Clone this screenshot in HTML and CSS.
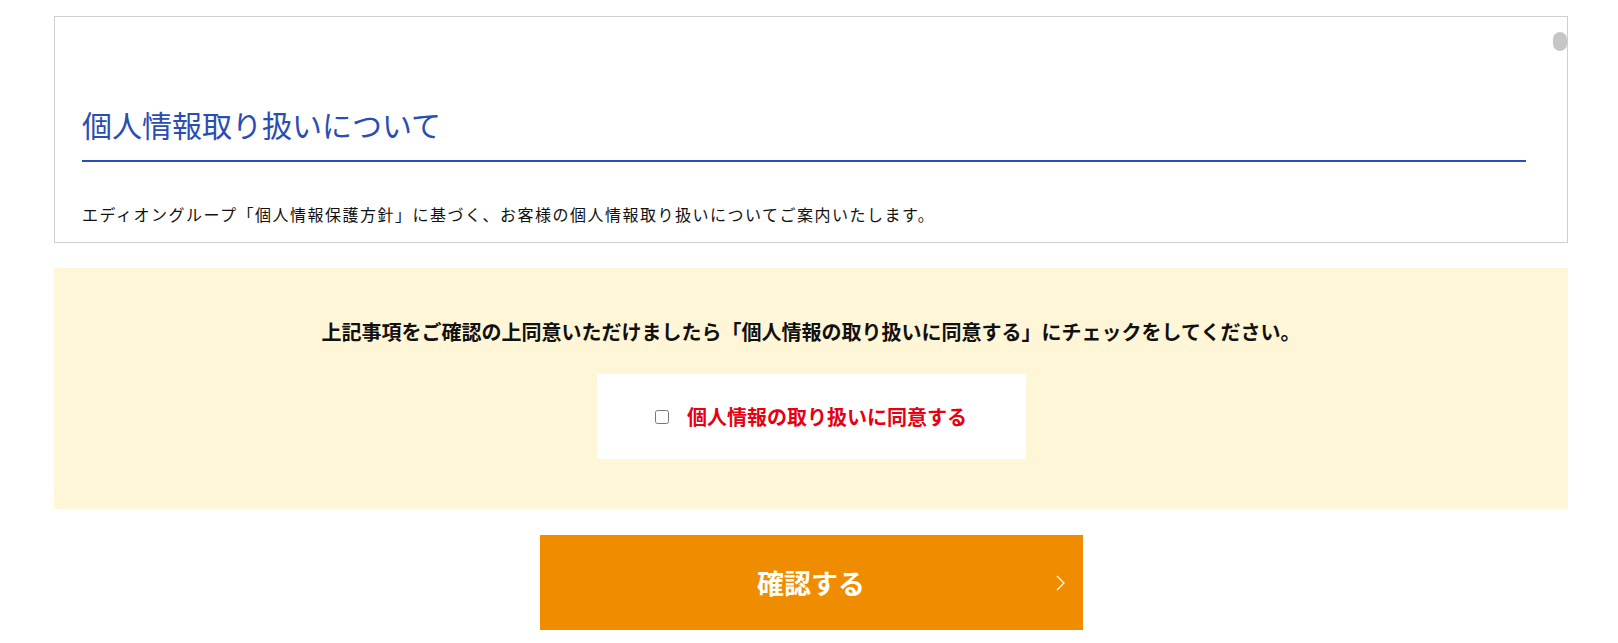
FILE: index.html
```html
<!DOCTYPE html>
<html lang="ja">
<head>
    <meta charset="UTF-8">
    <meta name="viewport" content="width=device-width, initial-scale=1.0">
    <title>個人情報取り扱いについて</title>
    <link rel="stylesheet" href="styles.css">
</head>
<body>

    <div class="wrap">
        <!-- 規約エリア（スクロール） -->
        <div class="policy">
            <div class="policy-inner">
                <h2 class="policy-title">個人情報取り扱いについて</h2>
                <p class="policy-lead">エディオングループ「個人情報保護方針」に基づく、お客様の個人情報取り扱いについてご案内いたします。</p>
            </div>
            <span class="policy-thumb"></span>
        </div>

        <!-- 同意チェック -->
        <div class="agree">
            <p class="agree-text">上記事項をご確認の上同意いただけましたら「個人情報の取り扱いに同意する」にチェックをしてください。</p>
            <label class="agree-box">
                <input type="checkbox" class="agree-check">
                <span class="agree-label">個人情報の取り扱いに同意する</span>
            </label>
        </div>

        <div class="actions">
            <button type="button" class="button">
                確認する
                <svg class="button-arrow" width="9" height="16" viewBox="0 0 9 16">
                    <path d="M1 1 L8 8 L1 15" fill="none" stroke="#fff" stroke-width="1.2"/>
                </svg>
            </button>
        </div>
    </div>

</body>
</html>
```

FILE: styles.css
```css
body {
    font-family: "Noto Sans CJK JP", "Noto Sans", sans-serif;
    margin: 0;
    padding: 0;
    background-color: #fff;
    color: #222;
}
.wrap {
    width: 1514px;
    margin: 16px 0 0 54px;
}
.policy {
    position: relative;
    height: 227px;
    box-sizing: border-box;
    border: 1px solid #cfcfcf;
    overflow: hidden;
}
.policy-inner {
    padding: 85px 41px 0 27px;
}
.policy-title {
    margin: 0;
    padding-bottom: 13px;
    font-size: 30px;
    font-weight: 400;
    line-height: 45px;
    color: #2a4db3;
    border-bottom: 2px solid #2a4db3;
}
.policy-lead {
    margin: 38px 0 0;
    font-size: 16px;
    line-height: 28.8px;
    letter-spacing: 1.5px;
    color: #111;
}
/* スクロールバーのつまみ */
.policy-thumb {
    position: absolute;
    top: 15px;
    right: 0;
    width: 14px;
    height: 19px;
    border-radius: 7px;
    background-color: #c6c6c6;
}
.agree {
    margin-top: 25px;
    padding: 49px 0 50px;
    background-color: #fff6d7;
    display: flex;
    flex-direction: column;
    align-items: center;
}
.agree-text {
    margin: 0;
    font-size: 20px;
    font-weight: 700;
    line-height: 30px;
    color: #111;
}
.agree-box {
    margin-top: 27px;
    width: 429px;
    height: 85px;
    box-sizing: border-box;
    background-color: #fff;
    display: flex;
    align-items: center;
    justify-content: center;
    gap: 18px;
    cursor: pointer;
}
.agree-check {
    margin: 0;
    width: 14px;
    height: 14px;
}
.agree-label {
    font-size: 20px;
    font-weight: 700;
    line-height: 30px;
    color: #e50012;
}
.actions {
    display: flex;
    justify-content: center;
    padding-top: 26px;
}
.button {
    position: relative;
    width: 543px;
    height: 95px;
    border: none;
    background-color: #f08c00;
    color: #fff;
    font-family: inherit;
    font-size: 27px;
    font-weight: 700;
    cursor: pointer;
}
.button-arrow {
    position: absolute;
    right: 18px;
    top: 40px;
}
```
